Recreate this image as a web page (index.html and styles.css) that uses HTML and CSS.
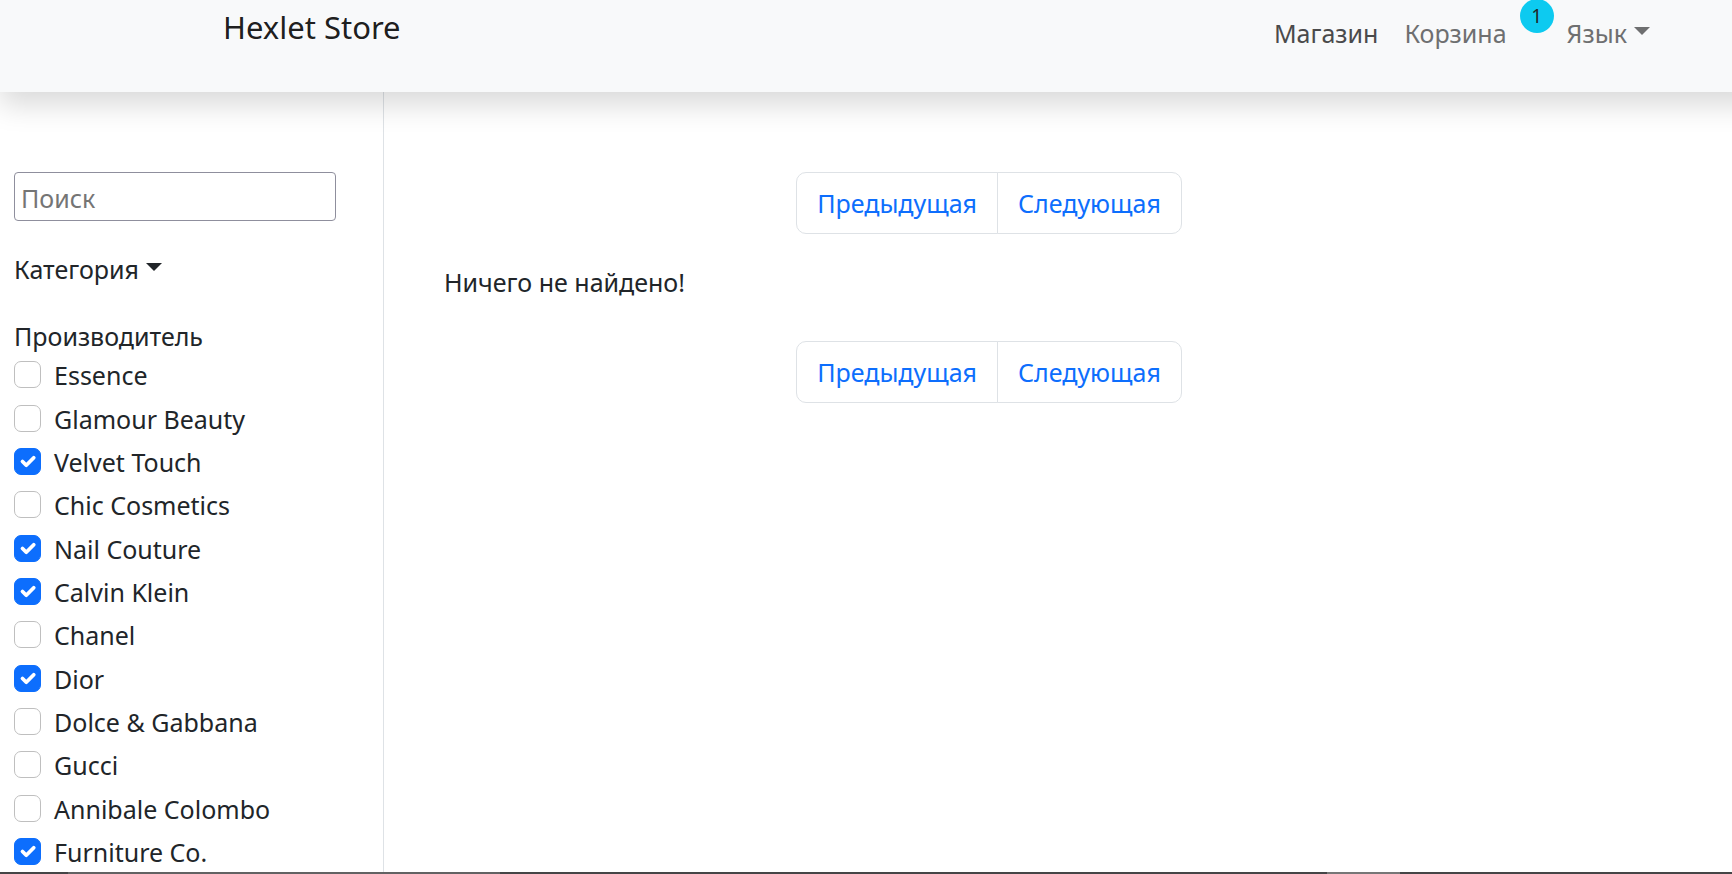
FILE: index.html
```html
<!DOCTYPE html>
<html lang="ru">
<head>
<meta charset="utf-8">
<title>Hexlet Store</title>
<link rel="stylesheet" href="styles.css">
</head>
<body>
<header class="navbar">
  <a class="brand" href="#">Hexlet Store</a>
  <nav class="nav">
    <a class="nav-link active" href="#">Магазин</a>
    <a class="nav-link cart" href="#">Корзина<span class="badge">1</span></a>
    <button class="nav-link toggle" type="button">Язык<span class="caret"></span></button>
  </nav>
</header>
<div class="page">
  <aside class="sidebar">
    <input class="search" type="text" placeholder="Поиск" aria-label="Поиск">
    <button class="toggle category" type="button">Категория<span class="caret"></span></button>
    <fieldset class="brands">
      <legend class="legend">Производитель</legend>
      <div class="checks">
        <label class="check"><input type="checkbox">Essence</label>
        <label class="check"><input type="checkbox">Glamour Beauty</label>
        <label class="check"><input type="checkbox" checked>Velvet Touch</label>
        <label class="check"><input type="checkbox">Chic Cosmetics</label>
        <label class="check"><input type="checkbox" checked>Nail Couture</label>
        <label class="check"><input type="checkbox" checked>Calvin Klein</label>
        <label class="check"><input type="checkbox">Chanel</label>
        <label class="check"><input type="checkbox" checked>Dior</label>
        <label class="check"><input type="checkbox">Dolce &amp; Gabbana</label>
        <label class="check"><input type="checkbox">Gucci</label>
        <label class="check"><input type="checkbox">Annibale Colombo</label>
        <label class="check"><input type="checkbox" checked>Furniture Co.</label>
      </div>
    </fieldset>
  </aside>
  <main class="content">
    <nav class="pagination" aria-label="Страницы сверху">
      <a class="page-link" href="#">Предыдущая</a>
      <a class="page-link" href="#">Следующая</a>
    </nav>
    <p class="empty">Ничего не найдено!</p>
    <nav class="pagination" aria-label="Страницы снизу">
      <a class="page-link" href="#">Предыдущая</a>
      <a class="page-link" href="#">Следующая</a>
    </nav>
  </main>
</div>
<footer class="bottom-strip"></footer>
</body>
</html>
```
FILE: styles.css
```css
* {
  box-sizing: border-box;
}

body {
  display: flex;
  flex-direction: column;
  height: 100vh;
  margin: 0;
  overflow: hidden;
  background: #fff;
  color: #212529;
  font-family: "Noto Sans", "Open Sans", sans-serif;
  font-size: 25px;
  line-height: 40px;
}

a {
  color: inherit;
  text-decoration: none;
}

button {
  padding: 0;
  border: 0;
  background: none;
  color: inherit;
  font: inherit;
}

/* The bar runs past the right edge so its shadow does not fade there. */
.navbar {
  position: relative;
  z-index: 1;
  display: flex;
  flex: none;
  justify-content: space-between;
  align-items: flex-start;
  min-height: 92px;
  margin-right: -28px;
  padding: 0 110px 0 223px;
  background: #f8f9fa;
  box-shadow: 0 13px 27px rgba(0, 0, 0, .15);
}

.brand {
  padding-top: 2px;
  color: rgba(0, 0, 0, .9);
  font-size: 31px;
  line-height: 50px;
}

.nav {
  display: flex;
  gap: 26px;
  padding-top: 13px;
}

.nav-link {
  color: #6e6f70;
}

.nav-link.active {
  color: #4a4a4b;
}

.cart {
  position: relative;
  margin-right: 34px;
}

.badge {
  position: absolute;
  top: -14px;
  left: calc(100% + 13px);
  width: 34px;
  height: 34px;
  border-radius: 50%;
  background: #0dcaf0;
  color: #212529;
  font-size: 19px;
  line-height: 34px;
  text-align: center;
}

.toggle {
  display: flex;
  align-items: center;
  gap: 7px;
}

.caret {
  margin-bottom: 4px;
  border: 8px solid transparent;
  border-top-color: currentColor;
  border-bottom: 0;
}

.page {
  display: flex;
  flex: 1;
  min-height: 0;
}

.sidebar {
  display: flex;
  flex: none;
  flex-direction: column;
  align-items: flex-start;
  width: 384px;
  padding: 80px 47px 0 14px;
  overflow: hidden;
  border-right: 1px solid #dee2e6;
}

.search {
  flex: none;
  width: 100%;
  height: 49px;
  padding: 4px 6px 2px;
  border: 1px solid #8f8f9d;
  border-radius: 4px;
  font: inherit;
}

.search::placeholder {
  color: #757575;
}

.category {
  margin-top: 28px;
}

.brands {
  margin: 27px 0 0;
  padding: 0;
  border: 0;
}

.legend {
  padding: 0;
}

.checks {
  display: grid;
  grid-auto-rows: 44px 43px 43px;
}

.check {
  display: flex;
  align-items: flex-start;
  gap: 13px;
  line-height: 38px;
}

.check input {
  width: 27px;
  height: 27px;
  margin: 5px 0 0;
  appearance: none;
  border: 1px solid #bfbfbf;
  border-radius: 7px;
}

.check input:checked {
  border-color: #0d6efd;
  background: #0d6efd url("data:image/svg+xml,%3csvg xmlns='http://www.w3.org/2000/svg' viewBox='0 0 20 20'%3e%3cpath fill='none' stroke='%23fff' stroke-linecap='round' stroke-linejoin='round' stroke-width='3' d='m6 10 3 3 6-6'/%3e%3c/svg%3e") center / contain no-repeat;
}

.content {
  flex: 1;
  padding: 80px 198px 0 60px;
}

.pagination {
  display: flex;
  justify-content: center;
}

.page-link {
  padding: 10px 20px;
  border: 1px solid #dee2e6;
  color: #0d6efd;
}

.page-link:first-child {
  border-radius: 10px 0 0 10px;
}

.page-link:last-child {
  margin-left: -1px;
  border-radius: 0 10px 10px 0;
}

.empty {
  margin: 28px 0 39px;
}

.bottom-strip {
  flex: none;
  height: 2px;
  background: linear-gradient(to right, #454546 68px, #626263 68px 500px, #454546 500px 1327px, #777 1327px 1400px, #454546 1400px);
}
```
